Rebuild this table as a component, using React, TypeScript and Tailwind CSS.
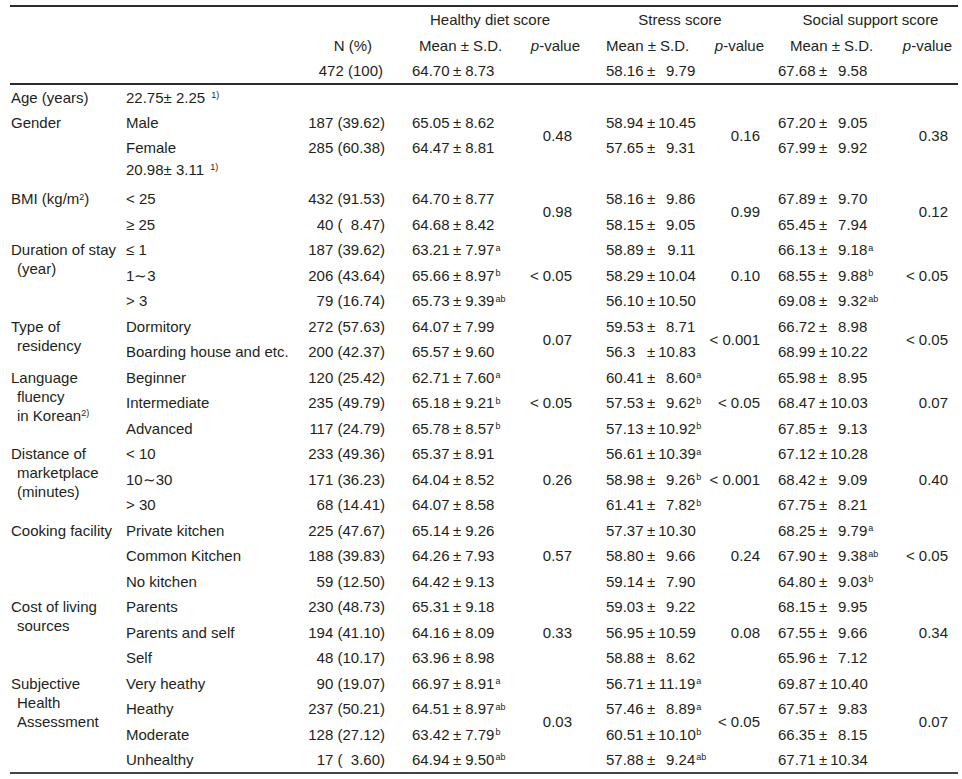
import React from 'react';

type Score = [string, string, string?];

type Row = {
  sub: React.ReactNode;
  n?: string;
  h?: Score;
  s?: Score;
  c?: Score;
  lift?: boolean;
};

type Group = {
  cat: React.ReactNode[];
  rows: Row[];
  p?: [string, string, string];
};

const groups: Group[] = [
  { cat: ['Age (years)'], rows: [{ sub: <>22.75± 2.25 <sup className="text-[9px] ml-[2px]">1)</sup></> }] },
  {
    cat: ['Gender'],
    rows: [
      { sub: 'Male', n: '187 (39.62)', h: ['65.05', '8.62'], s: ['58.94', '10.45'], c: ['67.20', '9.05'] },
      { sub: 'Female', n: '285 (60.38)', h: ['64.47', '8.81'], s: ['57.65', '9.31'], c: ['67.99', '9.92'] },
    ],
    p: ['0.48', '0.16', '0.38'],
  },
  { cat: [], rows: [{ sub: <>20.98± 3.11 <sup className="text-[9px] ml-[2px]">1)</sup></>, lift: true }] },
  {
    cat: [<>BMI (kg/m<sup className="text-[9px]">2</sup>)</>],
    rows: [
      { sub: '< 25', n: '432 (91.53)', h: ['64.70', '8.77'], s: ['58.16', '9.86'], c: ['67.89', '9.70'] },
      { sub: '≥ 25', n: '40 (  8.47)', h: ['64.68', '8.42'], s: ['58.15', '9.05'], c: ['65.45', '7.94'] },
    ],
    p: ['0.98', '0.99', '0.12'],
  },
  {
    cat: ['Duration of stay', '(year)'],
    rows: [
      { sub: '≤ 1', n: '187 (39.62)', h: ['63.21', '7.97', 'a'], s: ['58.89', '9.11'], c: ['66.13', '9.18', 'a'] },
      { sub: '1∼3', n: '206 (43.64)', h: ['65.66', '8.97', 'b'], s: ['58.29', '10.04'], c: ['68.55', '9.88', 'b'] },
      { sub: '> 3', n: '79 (16.74)', h: ['65.73', '9.39', 'ab'], s: ['56.10', '10.50'], c: ['69.08', '9.32', 'ab'] },
    ],
    p: ['< 0.05', '0.10', '< 0.05'],
  },
  {
    cat: ['Type of', 'residency'],
    rows: [
      { sub: 'Dormitory', n: '272 (57.63)', h: ['64.07', '7.99'], s: ['59.53', '8.71'], c: ['66.72', '8.98'] },
      { sub: 'Boarding house and etc.', n: '200 (42.37)', h: ['65.57', '9.60'], s: ['56.3', '10.83'], c: ['68.99', '10.22'] },
    ],
    p: ['0.07', '< 0.001', '< 0.05'],
  },
  {
    cat: ['Language', 'fluency', <>in Korean<sup className="text-[9px]">2)</sup></>],
    rows: [
      { sub: 'Beginner', n: '120 (25.42)', h: ['62.71', '7.60', 'a'], s: ['60.41', '8.60', 'a'], c: ['65.98', '8.95'] },
      { sub: 'Intermediate', n: '235 (49.79)', h: ['65.18', '9.21', 'b'], s: ['57.53', '9.62', 'b'], c: ['68.47', '10.03'] },
      { sub: 'Advanced', n: '117 (24.79)', h: ['65.78', '8.57', 'b'], s: ['57.13', '10.92', 'b'], c: ['67.85', '9.13'] },
    ],
    p: ['< 0.05', '< 0.05', '0.07'],
  },
  {
    cat: ['Distance of', 'marketplace', '(minutes)'],
    rows: [
      { sub: '< 10', n: '233 (49.36)', h: ['65.37', '8.91'], s: ['56.61', '10.39', 'a'], c: ['67.12', '10.28'] },
      { sub: '10∼30', n: '171 (36.23)', h: ['64.04', '8.52'], s: ['58.98', '9.26', 'b'], c: ['68.42', '9.09'] },
      { sub: '> 30', n: '68 (14.41)', h: ['64.07', '8.58'], s: ['61.41', '7.82', 'b'], c: ['67.75', '8.21'] },
    ],
    p: ['0.26', '< 0.001', '0.40'],
  },
  {
    cat: ['Cooking facility'],
    rows: [
      { sub: 'Private kitchen', n: '225 (47.67)', h: ['65.14', '9.26'], s: ['57.37', '10.30'], c: ['68.25', '9.79', 'a'] },
      { sub: 'Common Kitchen', n: '188 (39.83)', h: ['64.26', '7.93'], s: ['58.80', '9.66'], c: ['67.90', '9.38', 'ab'] },
      { sub: 'No kitchen', n: '59 (12.50)', h: ['64.42', '9.13'], s: ['59.14', '7.90'], c: ['64.80', '9.03', 'b'] },
    ],
    p: ['0.57', '0.24', '< 0.05'],
  },
  {
    cat: ['Cost of living', 'sources'],
    rows: [
      { sub: 'Parents', n: '230 (48.73)', h: ['65.31', '9.18'], s: ['59.03', '9.22'], c: ['68.15', '9.95'] },
      { sub: 'Parents and self', n: '194 (41.10)', h: ['64.16', '8.09'], s: ['56.95', '10.59'], c: ['67.55', '9.66'] },
      { sub: 'Self', n: '48 (10.17)', h: ['63.96', '8.98'], s: ['58.88', '8.62'], c: ['65.96', '7.12'] },
    ],
    p: ['0.33', '0.08', '0.34'],
  },
  {
    cat: ['Subjective', 'Health', 'Assessment'],
    rows: [
      { sub: 'Very heathy', n: '90 (19.07)', h: ['66.97', '8.91', 'a'], s: ['56.71', '11.19', 'a'], c: ['69.87', '10.40'] },
      { sub: 'Heathy', n: '237 (50.21)', h: ['64.51', '8.97', 'ab'], s: ['57.46', '8.89', 'a'], c: ['67.57', '9.83'] },
      { sub: 'Moderate', n: '128 (27.12)', h: ['63.42', '7.79', 'b'], s: ['60.51', '10.10', 'b'], c: ['66.35', '8.15'] },
      { sub: 'Unhealthy', n: '17 (  3.60)', h: ['64.94', '9.50', 'ab'], s: ['57.88', '9.24', 'ab'], c: ['67.71', '10.34'] },
    ],
    p: ['0.03', '< 0.05', '0.07'],
  },
];

function MeanSD({ v, wide }: { v?: Score; wide?: boolean }) {
  if (!v) return null;
  return (
    <span className="inline-flex items-baseline whitespace-pre">
      <span className="inline-block w-[41px]">{v[0]}</span>
      <span className="mr-[3px]">±</span>
      <span className={wide ? 'inline-block w-[37px] text-right' : 'inline-block ml-[1px]'}>{v[1]}</span>
      {v[2] && <sup className="text-[9px] ml-[1px]">{v[2]}</sup>}
    </span>
  );
}

const PV = () => (
  <>
    <i>p</i>-value
  </>
);

export default function App() {
  return (
    <div className="w-[962px] min-h-[779px] bg-white pt-[5px] pl-[10px] text-[#231f20] font-['Liberation_Sans',Arial,sans-serif] text-[15px] leading-none">
      <table className="table-fixed border-collapse w-[948px]">
        <colgroup>
          <col className="w-[115px]" />
          <col className="w-[175px]" />
          <col className="w-[95px]" />
          <col className="w-[125px]" />
          <col className="w-[65px]" />
          <col className="w-[120px]" />
          <col className="w-[70px]" />
          <col className="w-[120px]" />
          <col className="w-[63px]" />
        </colgroup>
        <thead>
          <tr className="h-[26px] border-t-2 border-[#2b2b2b]">
            <th colSpan={3} />
            <th colSpan={2} className="font-normal text-center">Healthy diet score</th>
            <th colSpan={2} className="font-normal text-center">Stress score</th>
            <th colSpan={2} className="font-normal text-center pl-[8px]">Social support score</th>
          </tr>
          <tr className="h-[26px]">
            <th colSpan={2} />
            <th className="font-normal text-right pr-[23px]">N (%)</th>
            <th className="font-normal text-left pl-[24px]">Mean ± S.D.</th>
            <th className="font-normal text-right pr-[5px]"><PV /></th>
            <th className="font-normal text-left pl-[21px]">Mean ± S.D.</th>
            <th className="font-normal text-right pr-[11px]"><PV /></th>
            <th className="font-normal text-left pl-[15px]">Mean ± S.D.</th>
            <th className="font-normal text-right pr-[6px]"><PV /></th>
          </tr>
          <tr className="h-[26px] border-b-2 border-[#2b2b2b]">
            <th colSpan={2} />
            <th className="font-normal text-right pr-[12px]">472 (100)</th>
            <th className="font-normal text-left pl-[17px]"><MeanSD v={['64.70', '8.73']} /></th>
            <th />
            <th className="font-normal text-left pl-[21px]"><MeanSD v={['58.16', '9.79']} wide /></th>
            <th />
            <th className="font-normal text-left pl-[3px]"><MeanSD v={['67.68', '9.58']} wide /></th>
            <th />
          </tr>
        </thead>
        <tbody className="border-b-2 border-[#444]">
          {groups.map((g, gi) =>
            g.rows.map((r, ri) => (
              <tr key={`${gi}-${ri}`} className="h-[25.5px]">
                {ri === 0 && (
                  <td rowSpan={g.rows.length} className="align-top pt-[3px] pl-[1px] leading-[19px] whitespace-nowrap">
                    {g.cat.map((line, li) => (
                      <div key={li} className={li > 0 ? 'pl-[6px]' : ''}>
                        {line}
                      </div>
                    ))}
                  </td>
                )}
                <td className={`pl-[1px] whitespace-nowrap ${r.lift ? 'pb-[8px]' : ''}`}>{r.sub}</td>
                <td className="text-right pr-[10px] whitespace-pre">{r.n}</td>
                <td className="pl-[17px]"><MeanSD v={r.h} /></td>
                {ri === 0 && <td rowSpan={g.rows.length} className="text-right pr-[13px] whitespace-nowrap">{g.p?.[0]}</td>}
                <td className="pl-[21px]"><MeanSD v={r.s} wide /></td>
                {ri === 0 && <td rowSpan={g.rows.length} className="text-right pr-[15px] whitespace-nowrap">{g.p?.[1]}</td>}
                <td className="pl-[3px]"><MeanSD v={r.c} wide /></td>
                {ri === 0 && <td rowSpan={g.rows.length} className="text-right pr-[10px] whitespace-nowrap">{g.p?.[2]}</td>}
              </tr>
            ))
          )}
        </tbody>
      </table>
    </div>
  );
}
